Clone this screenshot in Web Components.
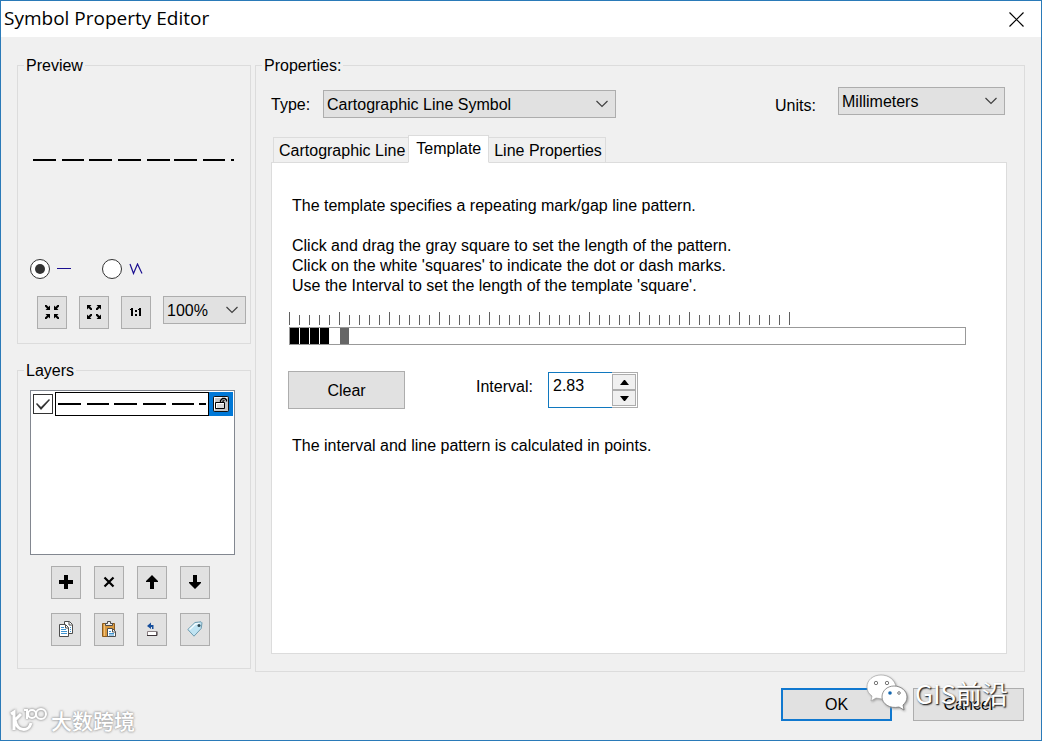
<!DOCTYPE html>
<html lang="en">
<head>
<meta charset="utf-8">
<meta name="viewport" content="width=device-width, initial-scale=1">
<title>Symbol Property Editor</title>
<style>
  body { margin: 0; font: 16px/20px "Liberation Sans", Arial, sans-serif; color: #000; background: #f0f0f0; }
</style>
</head>
<body>
<symbol-editor></symbol-editor>

<script>
const BASE = `
  * { box-sizing: border-box; }
  button, input, select { font: inherit; color: inherit; margin: 0; border-radius: 0; }
  svg { display: block; }
`;

function define(name, css, html, setup) {
  const template = document.createElement('template');
  template.innerHTML = `<style>${BASE}${css}</style>${html}`;
  customElements.define(name, class extends HTMLElement {
    connectedCallback() {
      if (this.shadowRoot) return;
      this.attachShadow({ mode: 'open' }).append(template.content.cloneNode(true));
      if (setup) setup.call(this, this.shadowRoot);
    }
  });
}

/* 16 x 17 glyphs of the tool buttons */
const ICONS = {
  shrink: `<path d="M6 1.500V6H1.500L3 4.500 1 2.500V1h1.500l2 2zM10 1.500V6h4.500L13 4.500l2-2V1h-1.500l-2 2zM6 14.500V10H1.500L3 11.500l-2 2V15h1.500l2-2zM10 14.500V10h4.500L13 11.500l2 2V15h-1.500l-2-2z"/>`,
  grow: `<path d="M1 5.500V1h4.500L4 2.500l2 2V6H4.500l-2-2zM15 5.500V1h-4.500L12 2.500l-2 2V6h1.500l2-2zM1 10.500V15h4.500L4 13.500l2-2V10H4.500l-2 2zM15 10.500V15h-4.500l1.500-1.500-2-2V10h1.500l2 2z"/>`,
  actual: `<path d="M3 4h2v8H3zM2 5h1v1H2zM11 4h2v8h-2zM10 5h1v1h-1zM7 6h2v2H7zM7 10h2v2H7z" shape-rendering="crispEdges"/>`,
  add: `<path d="M6 1h4v5h5v4h-5v5H6v-5H1V6h5z" shape-rendering="crispEdges"/>`,
  remove: `<path d="M3.500 3.500l9 9M12.500 3.500l-9 9" stroke="#000" stroke-width="2.200"/>`,
  up: `<path d="M8 1l6 6v1h-4v7H6V8H2V7z"/>`,
  down: `<path d="M8 15l6-6V8h-4V1H6v7H2v1z"/>`,
  copy: `<path d="M6.500 .5h5l3 3v9h-8z" fill="#fff" stroke="#4d4d4d"/><path d="M11 1v3h3" fill="none" stroke="#4d4d4d"/>
    <path d="M1.500 3.500h6l3 3v9h-9z" fill="#fff" stroke="#4d4d4d"/><path d="M7.500 4v3h3" fill="none" stroke="#4d4d4d"/>
    <path d="M3 6.500h3M3 8.500h5M3 10.500h6M3 12.500h6M12 6.500h1M12 8.500h1M12 10.500h1" stroke="#3f94d1"/>`,
  paste: `<path d="M1.500 2.500h12v13h-12z" fill="#d9993f" stroke="#8a5a1e"/><path d="M3 3h1v12H3z" fill="#efc07a"/>
    <path d="M4.500 4.500v-2h2v-2h3v2h2v2z" fill="#eee" stroke="#4d4d4d"/>
    <path d="M6.500 7.500h5l3 3v5h-8z" fill="#fff" stroke="#4d4d4d"/><path d="M11.500 8v3h3" fill="none" stroke="#4d4d4d"/>
    <path d="M8 10.500h2M8 12.500h5M8 14h5" stroke="#3f94d1"/>`,
  undo: `<path d="M3 5l4-3.500V4h2.500v4H8V6H7v2z" fill="#174f9c"/>
    <path d="M3.500 10.500h9v4h-9z" fill="#fff" stroke="#8a7f82"/><path d="M3 14.500h10v-4" fill="none" stroke="#3b3337"/>`,
  tag: `<path d="M.8 8.500L8 1.500l6-.7 1 1-.8 5.700-7.200 7.700z" fill="#bfe3f2" stroke="#6f9cb0" stroke-linejoin="round"/>
    <path d="M2.500 8.500L8.500 3l4-.6" fill="none" stroke="#f2fbff" stroke-width="1.500"/><circle cx="12" cy="4.500" r="1.500" fill="#2b4550"/>`
};

/* Square button with a glyph */
define('tool-button', `
  :host { display: block; width: 30px; height: 33px; }
  button { display: flex; width: 100%; height: 100%; padding: 0; align-items: center; justify-content: center;
    background: #e1e1e1; border: 1px solid #adadad; }
`, `<button type="button"><svg width="16" height="17" viewBox="0 0 16 17" aria-hidden="true"></svg></button>`,
function (root) {
  root.querySelector('svg').innerHTML = ICONS[this.getAttribute('icon')];
  root.querySelector('button').setAttribute('aria-label', this.getAttribute('label'));
});

/* Text button; "primary" gives the default-button frame */
define('text-button', `
  :host { display: block; width: 111px; height: 33px; }
  :host([large]) { width: 117px; height: 38px; }
  button { width: 100%; height: 100%; padding: 0; background: #e1e1e1; border: 1px solid #adadad; }
  :host([large]) button { padding-top: 2px; }
  :host([primary]) button { border: 2px solid #1078cf; }
`, `<button type="button"><slot></slot></button>`);

/* Group frame with a caption in its top edge */
define('group-box', `
  :host { display: flex; }
  fieldset { flex: 1; display: flex; flex-direction: column; min-width: 0; margin: 0; padding: 0; border: 1px solid #dcdcdc; }
  legend { margin-left: 6px; padding: 0 2px; line-height: 19px; }
`, `<fieldset><legend></legend><slot></slot></fieldset>`,
function (root) { root.querySelector('legend').textContent = this.getAttribute('caption'); });

/* Drop-down with an optional visible caption */
define('drop-down', `
  :host { display: flex; align-items: center; }
  :host([low]) { align-items: flex-end; }
  label { flex: none; width: var(--caption-width, auto); padding-top: 2px; }
  :host([low]) label { line-height: 18px; }
  label:empty { display: none; }
  .box { display: grid; flex: 1; align-items: center; height: 28px; }
  select { grid-area: 1 / 1; width: 100%; height: 28px; padding: 2px 24px 0 3px; appearance: none; background: #e1e1e1; border: 1px solid #adadad; }
  svg { grid-area: 1 / 1; justify-self: end; margin-right: 8px; pointer-events: none; }
`, `<label for="s"></label><div class="box"><select id="s"></select>
  <svg width="12" height="8" viewBox="0 0 12 8" aria-hidden="true"><path d="M.5 1l5.500 5.500L11.500 1" fill="none" stroke="#404040" stroke-width="1.200"/></svg></div>`,
function (root) {
  const select = root.querySelector('select');
  for (const text of this.getAttribute('options').split('|')) select.add(new Option(text));
  root.querySelector('label').textContent = this.getAttribute('caption') || '';
  if (!this.hasAttribute('caption')) select.setAttribute('aria-label', this.getAttribute('label'));
});

define('title-bar', `
  :host { display: flex; align-items: center; justify-content: space-between; height: 36px; padding: 0 17px 0 3px; background: #fff;
    font-family: "Open Sans", "Noto Sans", sans-serif; font-size: 19px; line-height: 24px; }
  h1 { margin: 0 0 2px; font: inherit; }
  button { padding: 0; border: 0; background: none; }
`, `<h1>Symbol Property Editor</h1>
<button type="button" aria-label="Close"><svg width="15" height="15" viewBox="0 0 15 15"><path d="M.5 .5l14 14M14.500 .5l-14 14" stroke="#000" stroke-width="1.200"/></svg></button>`);

define('preview-group', `
  .canvas { display: flex; align-items: center; height: 169px; padding-left: 15px; }
  .modes { display: flex; gap: 30px; margin-top: 15px; padding-left: 12px; height: 20px; }
  label { display: flex; align-items: center; gap: 7px; width: 42px; }
  input { flex: none; display: grid; place-items: center; width: 20px; height: 20px; appearance: none; background: #fff; border: 1px solid #333; border-radius: 50%; }
  input:checked::before { content: ""; width: 10px; height: 10px; border-radius: 50%; background: #333; }
  svg { flex: none; }
  .tools { display: flex; align-items: flex-start; gap: 12px; margin: 17px 4px 14px 19px; }
  drop-down { flex: 1; }
`, `<group-box caption="Preview">
  <div class="canvas"><svg width="201" height="2" viewBox="0 0 201 2" role="img" aria-label="Line preview"><path d="M0 0h23v2H0zM29 0h22v2H29zM56 0h23v2H56zM85 0h23v2H85zM114 0h23v2h-23zM141 0h23v2h-23zM170 0h22v2h-22zM198 0h3v2h-3z"/></svg></div>
  <div class="modes">
    <label><input type="radio" name="shape" aria-label="Straight line" checked><svg width="14" height="2" viewBox="0 0 14 2"><path d="M0 0h14v1H0z" fill="#1b0f91" shape-rendering="crispEdges"/></svg></label>
    <label><input type="radio" name="shape" aria-label="Zigzag line"><svg width="15" height="12" viewBox="0 0 15 12"><path d="M1 1l3.500 9.500L8.500 1l4.500 9.500" fill="none" stroke="#1b0f91" stroke-width="1.200"/></svg></label>
  </div>
  <div class="tools">
    <tool-button icon="shrink" label="Zoom out"></tool-button>
    <tool-button icon="grow" label="Zoom in"></tool-button>
    <tool-button icon="actual" label="Actual size"></tool-button>
    <drop-down label="Zoom" options="100%|200%|400%"></drop-down>
  </div>
</group-box>`);

define('layers-group', `
  .list { height: 165px; margin: 10px 15px 11px 12px; padding: 1px; background: #fff; border: 1px solid #828790; }
  .item { display: flex; align-items: center; height: 24px; }
  input { flex: none; width: 20px; height: 20px; margin: 0 2px 0 1px; appearance: none; background: #fff; border: 1px solid #333; }
  input:checked::before { content: ""; display: block; width: 18px; height: 18px; background: #333;
    clip-path: polygon(2px 9px, 3px 8px, 7px 12px, 15px 4px, 16px 5px, 7px 15px); }
  .line { flex: 1; display: flex; align-items: center; height: 24px; padding-left: 2px; border: 1px solid #000; overflow: hidden; }
  .lock { display: grid; place-items: center; width: 24px; height: 24px; padding: 0; background: #0078d7; border: 0; }
  .tools { display: grid; grid-template-columns: repeat(4, 30px); gap: 14px 13px; margin: 0 12px 22px 33px; }
`, `<group-box caption="Layers">
  <div class="list"><div class="item">
    <input type="checkbox" aria-label="Layer visible" checked>
    <div class="line"><svg width="149" height="2" viewBox="0 0 149 2" role="img" aria-label="Layer line"><path d="M0 0h23v2H0zM29 0h22v2H29zM56 0h23v2H56zM85 0h23v2H85zM114 0h22v2h-22zM141 0h7v2h-7z"/></svg></div>
    <button class="lock" type="button" aria-label="Lock layer"><svg width="16" height="16" viewBox="0 0 16 16">
      <rect x=".5" y=".5" width="15" height="15" rx="1" fill="#c6c6c6" stroke="#111"/><path d="M1.500 14V1.500H14" fill="none" stroke="#fff"/>
      <path d="M2.500 6.500h9v6h-9z" fill="#d8d8d8" stroke="#000"/><path d="M3.500 12V7.500H11" fill="none" stroke="#fff"/><path d="M7.500 6V4.500L9.500 2.500h2.500l1.500 1.500v1.500M10 6V5l1.500-.5" fill="none" stroke="#000" stroke-width="1.300"/></svg></button>
  </div></div>
  <div class="tools">
    <tool-button icon="add" label="Add layer"></tool-button>
    <tool-button icon="remove" label="Delete layer"></tool-button>
    <tool-button icon="up" label="Move layer up"></tool-button>
    <tool-button icon="down" label="Move layer down"></tool-button>
    <tool-button icon="copy" label="Copy layer"></tool-button>
    <tool-button icon="paste" label="Paste layer"></tool-button>
    <tool-button icon="undo" label="Reset layer"></tool-button>
    <tool-button icon="tag" label="Layer tags"></tool-button>
  </div>
</group-box>`);

/* Ruler with a tick for each template square, and the pattern strip under it */
define('pattern-ruler', `
  :host { display: block; }
  .strip { display: flex; gap: 1px; height: 18px; margin-top: 2px; border: 1px solid #999; }
  .strip i { flex: none; width: 9px; }
  .mark { background: #000; }
  .end { background: #666; }
`, `<svg width="501" height="13" viewBox="0 0 501 13" aria-hidden="true"><path fill="#606060"/></svg>
<div class="strip"><i class="mark"></i><i class="mark"></i><i class="mark"></i><i class="mark"></i><i></i><i class="end"></i></div>`,
function (root) {
  let d = '';
  for (let i = 0; i <= 50; i++) d += i % 5 ? `M${i * 10} 3h1v10h-1z` : `M${i * 10} 0h1v13h-1z`;
  root.querySelector('path').setAttribute('d', d);
});

define('interval-field', `
  :host { display: flex; align-items: center; }
  label { width: 72px; height: 36px; line-height: 30px; }
  .spin { display: flex; width: 90px; height: 36px; border: 1px solid #adadad; border-left: 0; }
  input { width: 64px; height: 36px; margin: -1px 0; padding: 0 0 8px 4px; background: #fff; border: 1px solid #1078bf; border-right: 0; outline: 0; appearance: textfield; }
  input::-webkit-inner-spin-button { appearance: none; margin: 0; }
  .arrows { display: grid; grid-template-rows: 1fr 1fr; flex: 1; padding: 1px 1px 1px 0; }
  .arrows button { display: grid; place-items: center; min-height: 0; padding: 0; background: #f0f0f0; border: 1px solid #adadad; }
`, `<label for="n">Interval:</label><div class="spin"><input id="n" type="number" step="0.01" value="2.83">
<div class="arrows">
  <button type="button" aria-label="Increase"><svg width="9" height="5" viewBox="0 0 9 5"><path d="M0 5l4-5h1l4 5z"/></svg></button>
  <button type="button" aria-label="Decrease"><svg width="9" height="5" viewBox="0 0 9 5"><path d="M0 0h9L5 5H4z"/></svg></button>
</div></div>`);

define('template-page', `
  :host { display: block; padding: 33px 20px; background: #fff; border: 1px solid #dcdcdc; }
  p { margin: 0; }
  .intro { margin-bottom: 20px; }
  pattern-ruler { margin: 16px 20px 26px -3px; }
  .row { display: flex; align-items: center; gap: 71px; margin: 0 0 27px -4px; }
`, `<p class="intro">The template specifies a repeating mark/gap line pattern.</p>
<p>Click and drag the gray square to set the length of the pattern.</p>
<p>Click on the white 'squares' to indicate the dot or dash marks.</p>
<p>Use the Interval to set the length of the template 'square'.</p>
<pattern-ruler></pattern-ruler>
<div class="row"><text-button large>Clear</text-button><interval-field></interval-field></div>
<p>The interval and line pattern is calculated in points.</p>`);

define('tab-strip', `
  :host { display: flex; align-items: flex-end; margin: 0 2px -1px; }
  button { height: 26px; padding: 2px 3px 0 5px; background: #f0f0f0; border: 1px solid #dcdcdc; white-space: nowrap; }
  button + button { border-left: 0; }
  button[aria-selected="true"] { position: relative; height: 28px; padding: 0 7px; background: #fff; border: 1px solid #dcdcdc; border-bottom-color: #fff; margin-left: -1px; }
`, `<button type="button" role="tab" aria-selected="false">Cartographic Line</button><button type="button" role="tab" aria-selected="true">Template</button><button type="button" role="tab" aria-selected="false">Line Properties</button>`,
function () { this.setAttribute('role', 'tablist'); });

define('properties-group', `
  :host, group-box { display: flex; }
  group-box { flex: 1; }
  .types { display: flex; justify-content: space-between; height: 31px; margin: 12px 19px 17px 15px; }
  .type { align-self: flex-end; width: 345px; --caption-width: 52px; }
  .units { align-self: flex-start; width: 230px; --caption-width: 63px; }
  template-page { flex: 1; }
  .pages { flex: 1; display: flex; flex-direction: column; margin: 0 17px 17px 15px; }
`, `<group-box caption="Properties:">
  <div class="types">
    <drop-down class="type" caption="Type:" options="Cartographic Line Symbol|Simple Line Symbol|Hash Line Symbol"></drop-down>
    <drop-down class="units" low caption="Units:" options="Millimeters|Points|Inches|Centimeters"></drop-down>
  </div>
  <div class="pages"><tab-strip></tab-strip><template-page></template-page></div>
</group-box>`);

/* Overlaid channel marks in the two lower corners */
define('channel-mark', `
  :host { position: absolute; display: flex; align-items: center; pointer-events: none; white-space: nowrap;
    font-family: "Noto Sans CJK SC", sans-serif; color: #fff; }
  :host([kind="chat"]) { right: 33px; bottom: 27px; gap: 7px; font-size: 26px; line-height: 40px; text-shadow: 1px 1px 1px #333, 1px 1px 2px #555; }
  :host([kind="site"]) { left: 8px; bottom: 6px; gap: 3px; font-size: 21px; line-height: 28px; font-weight: 500; text-shadow: 0 0 2px #aaa, 0 0 3px #aaa, 0 0 2px #aaa; }
  svg { display: none; }
  :host([kind="chat"]) .chat, :host([kind="site"]) .site { display: block; }
  .chat { filter: drop-shadow(1px 1px 1px #999); }
  .site { filter: drop-shadow(0 0 1px #999) drop-shadow(0 0 1px #bbb); }
`, `<svg class="chat" width="42" height="38" viewBox="0 0 42 38" aria-hidden="true">
  <path d="M15 1C7 1 1 6 1 13c0 4 2 7 5 9l-1 5 5-3 6 1 14-12C29 6 23 1 15 1z" fill="#fff" stroke="#999" stroke-width=".6"/>
  <path d="M28 12c7 0 13 5 13 11 0 4-2 6-4 8l1 5-5-3c-9 2-17-3-17-10 0-6 5-11 12-11z" fill="#fff" stroke="#777" stroke-width=".8"/>
  <g fill="#fff" stroke="#777"><circle cx="10" cy="9" r="1.700"/><circle cx="21" cy="9" r="1.700"/><circle cx="33" cy="19" r="1.300"/></g><circle cx="24" cy="19" r="1.800" fill="#1568b0"/></svg>
<svg class="site" width="39" height="28" viewBox="0 0 39 28" fill="none" stroke="#fff" aria-hidden="true">
  <path d="M2 8l3-2v18M12 8l-6 6M6 14c2 12 14 12 16 3" stroke-width="3"/><path d="M15 4h3v9" stroke-width="2"/><circle cx="23" cy="8" r="4" stroke-width="2"/><circle cx="32" cy="8" r="5" stroke-width="2"/></svg>
<span><slot></slot></span>`);

define('symbol-editor', `
  :host { position: relative; display: flex; flex-direction: column; min-height: 100vh; background: #f0f0f0; border: 1px solid #2a7ab8; box-sizing: border-box; }
  main { flex: 1; display: grid; grid-template-columns: 234px minmax(0, 1fr); gap: 4px; padding: 19px 16px 16px; }
  .side { display: flex; flex-direction: column; gap: 17px; }
  footer { display: flex; justify-content: flex-end; gap: 21px; padding: 0 17px 19px; }
`, `<title-bar></title-bar>
<main>
  <div class="side"><preview-group></preview-group><layers-group></layers-group></div>
  <properties-group></properties-group>
</main>
<footer><text-button primary>OK</text-button><text-button>Cancel</text-button></footer>
<channel-mark kind="site">大数跨境</channel-mark>
<channel-mark kind="chat">GIS前沿</channel-mark>`);
</script>
</body>
</html>
